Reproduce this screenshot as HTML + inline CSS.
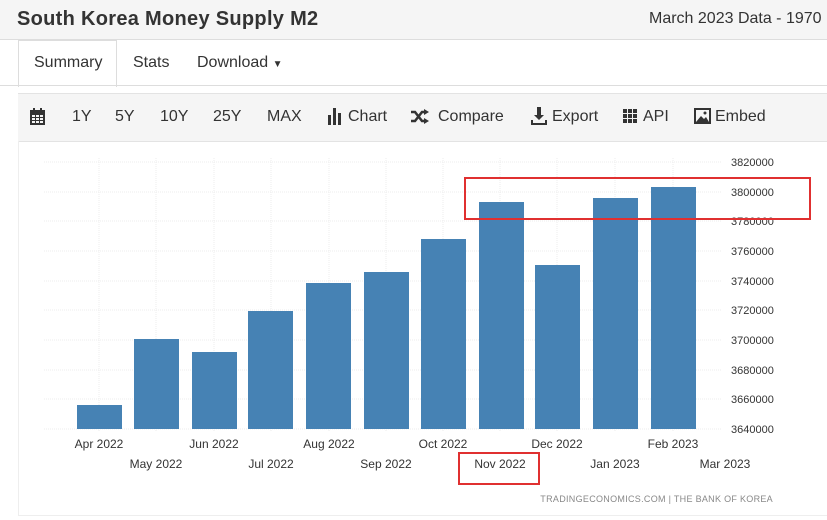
<!DOCTYPE html>
<html><head><style>
body{margin:0;width:827px;height:520px;overflow:hidden;background:#fff;font-family:"Liberation Sans",sans-serif;position:relative}
.hdr{position:absolute;left:0;top:0;width:827px;height:39px;background:#f5f5f5;border-bottom:1px solid #ddd}
.hdr h1{position:absolute;left:17px;top:8px;margin:0;font-size:20px;font-weight:bold;color:#333;letter-spacing:0.3px}
.hdr .r{position:absolute;left:649px;top:10px;font-size:16px;color:#333;white-space:nowrap}
.tabs{position:absolute;left:0;top:85px;width:827px;border-top:1px solid #ddd}
.tab{position:absolute;top:40px;font-size:16px;color:#333}
.sum{position:absolute;left:18px;top:40px;width:97px;height:46px;border:1px solid #ddd;border-bottom:none;background:#fff}
.tb{position:absolute;left:18px;top:93px;width:809px;height:47px;background:#f5f5f5;border-top:1px solid #e3e3e3;border-bottom:1px solid #e3e3e3}
.tb span{position:absolute;top:14px;font-size:16px;color:#333;white-space:nowrap}
.chart{position:absolute;left:18px;top:141px;width:809px;height:374px;border-left:1px solid #eee;border-bottom:1px solid #eee}
svg text{font-family:"Liberation Sans",sans-serif}
</style></head><body>
<div class="hdr"><h1>South Korea Money Supply M2</h1><div class="r">March 2023 Data - 1970</div></div>
<div class="sum"></div>
<div class="tabs"></div>
<div class="tab" style="left:34px;top:54px">Summary</div>
<div class="tab" style="left:133px;top:54px">Stats</div>
<div class="tab" style="left:197px;top:54px">Download <span style="font-size:10px">▼</span></div>
<div class="tb">
<svg style="position:absolute;left:12px;top:14px" width="16" height="18"><rect x="0" y="2" width="15" height="15" fill="#333"/><g fill="#f5f5f5"><rect x="2" y="7" width="3" height="2"/><rect x="6" y="7" width="3" height="2"/><rect x="10" y="7" width="3" height="2"/><rect x="2" y="10" width="3" height="2"/><rect x="6" y="10" width="3" height="2"/><rect x="10" y="10" width="3" height="2"/><rect x="2" y="13" width="3" height="2"/><rect x="6" y="13" width="3" height="2"/><rect x="10" y="13" width="3" height="2"/></g><rect x="3" y="0" width="2" height="3" fill="#333"/><rect x="10" y="0" width="2" height="3" fill="#333"/></svg>
<span style="left:54px">1Y</span><span style="left:97px">5Y</span><span style="left:142px">10Y</span><span style="left:195px">25Y</span><span style="left:249px">MAX</span>
<svg style="position:absolute;left:310px;top:14px" width="15" height="17"><rect x="0" y="7" width="3" height="10" fill="#333"/><rect x="5" y="0" width="3" height="17" fill="#333"/><rect x="10" y="5" width="3" height="12" fill="#333"/></svg>
<span style="left:330px">Chart</span>
<svg style="position:absolute;left:393px;top:15px" width="19" height="15"><path d="M0 3h4l7 9h3" fill="none" stroke="#333" stroke-width="2.5"/><path d="M0 12h4l7-9h3" fill="none" stroke="#333" stroke-width="2.5"/><path d="M13 0l5 3-5 3zM13 9l5 3-5 3z" fill="#333"/></svg>
<span style="left:420px">Compare</span>
<svg style="position:absolute;left:513px;top:13px" width="16" height="18"><path d="M6 0h4v8h3l-5 5-5-5h3z M0 13h2v3h12v-3h2v5H0z" fill="#333"/></svg>
<span style="left:534px">Export</span>
<svg style="position:absolute;left:605px;top:15px" width="15" height="15" fill="#333"><rect x="0" y="0" width="4" height="4"/><rect x="5" y="0" width="4" height="4"/><rect x="10" y="0" width="4" height="4"/><rect x="0" y="5" width="4" height="4"/><rect x="5" y="5" width="4" height="4"/><rect x="10" y="5" width="4" height="4"/><rect x="0" y="10" width="4" height="4"/><rect x="5" y="10" width="4" height="4"/><rect x="10" y="10" width="4" height="4"/></svg>
<span style="left:625px">API</span>
<svg style="position:absolute;left:676px;top:14px" width="17" height="16"><rect x="0" y="0" width="17" height="16" fill="#333"/><rect x="2" y="2" width="13" height="12" fill="#f5f5f5"/><path d="M2 14l5-6 3 3 2-2 3 5z" fill="#333"/><circle cx="11" cy="5" r="1.5" fill="#333"/></svg>
<span style="left:697px">Embed</span>
</div>
<div class="chart"></div>
<svg style="position:absolute;left:0;top:0" width="827" height="520">
<g stroke="#ececec" stroke-dasharray="1,1">
<line x1="44" y1="162" x2="722" y2="162"/><line x1="44" y1="192" x2="722" y2="192"/><line x1="44" y1="221" x2="722" y2="221"/><line x1="44" y1="251" x2="722" y2="251"/><line x1="44" y1="281" x2="722" y2="281"/><line x1="44" y1="310" x2="722" y2="310"/><line x1="44" y1="340" x2="722" y2="340"/><line x1="44" y1="370" x2="722" y2="370"/><line x1="44" y1="399" x2="722" y2="399"/><line x1="44" y1="429" x2="722" y2="429"/>
<line x1="99" y1="158" x2="99" y2="432"/><line x1="156" y1="158" x2="156" y2="432"/><line x1="214" y1="158" x2="214" y2="432"/><line x1="271" y1="158" x2="271" y2="432"/><line x1="329" y1="158" x2="329" y2="432"/><line x1="386" y1="158" x2="386" y2="432"/><line x1="443" y1="158" x2="443" y2="432"/><line x1="500" y1="158" x2="500" y2="432"/><line x1="557" y1="158" x2="557" y2="432"/><line x1="615" y1="158" x2="615" y2="432"/><line x1="673" y1="158" x2="673" y2="432"/>
</g>
<g fill="#4682b4">
<rect x="77" y="405" width="45" height="24"/><rect x="134" y="339" width="45" height="90"/><rect x="192" y="352" width="45" height="77"/><rect x="248" y="311" width="45" height="118"/><rect x="306" y="283" width="45" height="146"/><rect x="364" y="272" width="45" height="157"/><rect x="421" y="239" width="45" height="190"/><rect x="479" y="202" width="45" height="227"/><rect x="535" y="265" width="45" height="164"/><rect x="593" y="198" width="45" height="231"/><rect x="651" y="187" width="45" height="242"/>
</g>
<g font-size="11" fill="#333">
<text x="731" y="166">3820000</text><text x="731" y="196">3800000</text><text x="731" y="225">3780000</text><text x="731" y="255">3760000</text><text x="731" y="285">3740000</text><text x="731" y="314">3720000</text><text x="731" y="344">3700000</text><text x="731" y="374">3680000</text><text x="731" y="403">3660000</text><text x="731" y="433">3640000</text>
</g>
<g font-size="12" fill="#333" text-anchor="middle">
<text x="99" y="448">Apr 2022</text><text x="214" y="448">Jun 2022</text><text x="329" y="448">Aug 2022</text><text x="443" y="448">Oct 2022</text><text x="557" y="448">Dec 2022</text><text x="673" y="448">Feb 2023</text>
<text x="156" y="468">May 2022</text><text x="271" y="468">Jul 2022</text><text x="386" y="468">Sep 2022</text><text x="500" y="468">Nov 2022</text><text x="615" y="468">Jan 2023</text><text x="725" y="468">Mar 2023</text>
</g>
<text x="773" y="502" font-size="9" fill="#888" text-anchor="end" letter-spacing="0.3">TRADINGECONOMICS.COM  |  THE BANK OF KOREA</text>
<rect x="465" y="178" width="345" height="41" fill="none" stroke="#e03030" stroke-width="2"/>
<rect x="459" y="453" width="80" height="31" fill="none" stroke="#e03030" stroke-width="2"/>
</svg>
</body></html>
